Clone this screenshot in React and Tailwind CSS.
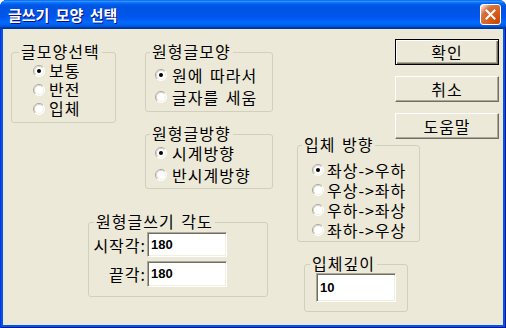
import React from "react";

function Radio({ checked }) {
  return (
    <svg width="12" height="12" viewBox="0 0 12 12" className="shrink-0">
      <circle cx="6" cy="6" r="5.5" fill="#FFFFFF" />
      <path d="M9.9 2.1 A5.5 5.5 0 0 0 2.1 9.9" stroke="#ACA899" strokeWidth="1" fill="none" />
      <path d="M2.1 9.9 A5.5 5.5 0 0 0 9.9 2.1" stroke="#FFFFFF" strokeWidth="1" fill="none" />
      <path d="M9.2 2.8 A4.5 4.5 0 0 0 2.8 9.2" stroke="#D4D0C8" strokeWidth="1" fill="none" />
      <path d="M2.8 9.2 A4.5 4.5 0 0 0 9.2 2.8" stroke="#F1EFE2" strokeWidth="1" fill="none" />
      {checked && <circle cx="6" cy="6" r="2" fill="#000000" />}
    </svg>
  );
}

function Group({ label, className, labelClass, children }) {
  return (
    <div className={"relative border border-[#D0D0BF] rounded-[3px] " + className}>
      <span className={"absolute -top-[10px] px-[2px] bg-[#ECE9D8] text-[16px] leading-[16px] whitespace-nowrap " + labelClass}>
        {label}
      </span>
      {children}
    </div>
  );
}

function Field({ value, className }) {
  return (
    <div
      className={
        "bg-white border border-t-[#ACA899] border-l-[#ACA899] border-r-white border-b-white shadow-[inset_1px_1px_#716F64,inset_-1px_-1px_#F1EFE2] flex items-center pl-[3px] font-['Liberation_Sans',sans-serif] font-bold text-[13px] leading-[16px] tracking-normal text-black " +
        className
      }
    >
      {value}
    </div>
  );
}

export default function App() {
  return (
    <div className="w-[506px] h-[328px] bg-white">
      <div className="w-[506px] h-[328px] flex flex-col rounded-t-[7px] overflow-hidden bg-[#0055EA] shadow-[inset_1px_0_#0831D9,inset_-1px_-1px_#00138C] font-['Noto_Sans_CJK_KR',sans-serif] text-black">
        {/* Title bar */}
        <div className="h-[29px] shrink-0 flex items-center pl-[8px] pr-[5px] bg-[linear-gradient(180deg,#0058EE_0%,#3593FF_4%,#288EFF_6%,#127DFF_8%,#036FFC_10%,#0262EE_14%,#0057E5_20%,#0054E3_24%,#0055EB_56%,#005BF5_66%,#026AFE_76%,#0062EF_86%,#0052D6_92%,#0040AB_94%,#003092_100%)]">
          <span className="flex-1 text-white font-bold text-[15px] leading-[20px] [word-spacing:3px] [text-shadow:1px_1px_#0F1089]">
            글쓰기 모양 선택
          </span>
          <div className="w-[21px] h-[21px] rounded-[3px] border border-white bg-[radial-gradient(circle_at_90%_90%,#CC4600_0%,#DC6527_55%,#CD7546_70%,#FFCCB2_90%,white_100%)] flex items-center justify-center">
            <svg width="13" height="13" viewBox="0 0 13 13">
              <path d="M2.5 2.5 L10.5 10.5 M10.5 2.5 L2.5 10.5" stroke="#FFFFFF" strokeWidth="2" strokeLinecap="square" />
            </svg>
          </div>
        </div>

        {/* Client area */}
        <div className="flex-1 flex items-start mx-[3px] mb-[3px] bg-[#ECE9D8] tracking-[1px]">
          {/* Left part */}
          <div className="flex flex-col w-[270px] shrink-0">
            <div className="flex items-start mt-[23px]">
              <Group label="글모양선택" className="w-[105px] h-[71px] ml-[8px] pt-[8px] pl-[21px]" labelClass="left-[7px]">
                <div className="flex items-center h-[19px] gap-[4px]">
                  <Radio checked />
                  <span className="text-[16px] leading-[19px]">보통</span>
                </div>
                <div className="flex items-center h-[19px] gap-[4px]">
                  <Radio />
                  <span className="text-[16px] leading-[19px]">반전</span>
                </div>
                <div className="flex items-center h-[19px] gap-[4px]">
                  <Radio />
                  <span className="text-[16px] leading-[19px]">입체</span>
                </div>
              </Group>
              <div className="flex flex-col ml-[29px]">
                <Group label="원형글모양" className="w-[128px] h-[60px] pt-[11px] pl-[9px]" labelClass="left-[4px]">
                  <div className="flex items-center h-[22px] gap-[5px]">
                    <Radio checked />
                    <span className="text-[16px] leading-[22px] [word-spacing:2px]">원에 따라서</span>
                  </div>
                  <div className="flex items-center h-[22px] gap-[5px]">
                    <Radio />
                    <span className="text-[16px] leading-[22px] [word-spacing:2px]">글자를 세움</span>
                  </div>
                </Group>
                <Group label="원형글방향" className="w-[128px] h-[55px] mt-[22px] pt-[7px] pl-[9px]" labelClass="left-[4px]">
                  <div className="flex items-center h-[22px] gap-[5px]">
                    <Radio checked />
                    <span className="text-[16px] leading-[22px]">시계방향</span>
                  </div>
                  <div className="flex items-center h-[22px] gap-[5px]">
                    <Radio />
                    <span className="text-[16px] leading-[22px]">반시계방향</span>
                  </div>
                </Group>
              </div>
            </div>
            <Group label="원형글쓰기 각도" className="w-[180px] h-[75px] ml-[85px] mt-[33px] pt-[9px] flex flex-col gap-[4px]" labelClass="left-[5px] [word-spacing:2px]">
              <div className="flex items-center">
                <span className="w-[57px] text-right text-[16px] leading-[20px]">시작각:</span>
                <Field value="180" className="w-[80px] h-[25px] ml-[1px]" />
              </div>
              <div className="flex items-center">
                <span className="w-[57px] text-right text-[16px] leading-[20px]">끝각:</span>
                <Field value="180" className="w-[80px] h-[26px] ml-[1px]" />
              </div>
            </Group>
          </div>

          {/* Right part */}
          <div className="flex flex-col">
            <div className="flex flex-col gap-[11px] ml-[122px] mt-[10px]">
              <div className="w-[104px] h-[26px] border border-black shadow-[inset_1px_1px_#FFFFFF,inset_-1px_-1px_#716F64,inset_-2px_-2px_#ACA899] flex items-center justify-center text-[16px] leading-[20px]">
                확인
              </div>
              <div className="w-[104px] h-[26px] border border-t-white border-l-white border-r-[#716F64] border-b-[#716F64] shadow-[inset_-1px_-1px_#ACA899] flex items-center justify-center text-[16px] leading-[20px]">
                취소
              </div>
              <div className="w-[104px] h-[26px] border border-t-white border-l-white border-r-[#716F64] border-b-[#716F64] shadow-[inset_-1px_-1px_#ACA899] flex items-center justify-center text-[16px] leading-[20px]">
                도움말
              </div>
            </div>
            <Group label="입체 방향" className="w-[123px] h-[97px] ml-[24px] mt-[6px] pt-[14px] pl-[14px]" labelClass="left-[4px] [word-spacing:2px]">
              <div className="flex items-center h-[20px] gap-[3px]">
                <Radio checked />
                <span className="text-[16px] leading-[20px]">좌상-&gt;우하</span>
              </div>
              <div className="flex items-center h-[20px] gap-[3px]">
                <Radio />
                <span className="text-[16px] leading-[20px]">우상-&gt;좌하</span>
              </div>
              <div className="flex items-center h-[20px] gap-[3px]">
                <Radio />
                <span className="text-[16px] leading-[20px]">우하-&gt;좌상</span>
              </div>
              <div className="flex items-center h-[20px] gap-[3px]">
                <Radio />
                <span className="text-[16px] leading-[20px]">좌하-&gt;우상</span>
              </div>
            </Group>
            <Group label="입체깊이" className="w-[104px] h-[48px] ml-[31px] mt-[22px] pt-[8px] pl-[11px]" labelClass="left-[5px]">
              <Field value="10" className="w-[80px] h-[29px] items-start pt-[6px]" />
            </Group>
          </div>
        </div>
      </div>
    </div>
  );
}
